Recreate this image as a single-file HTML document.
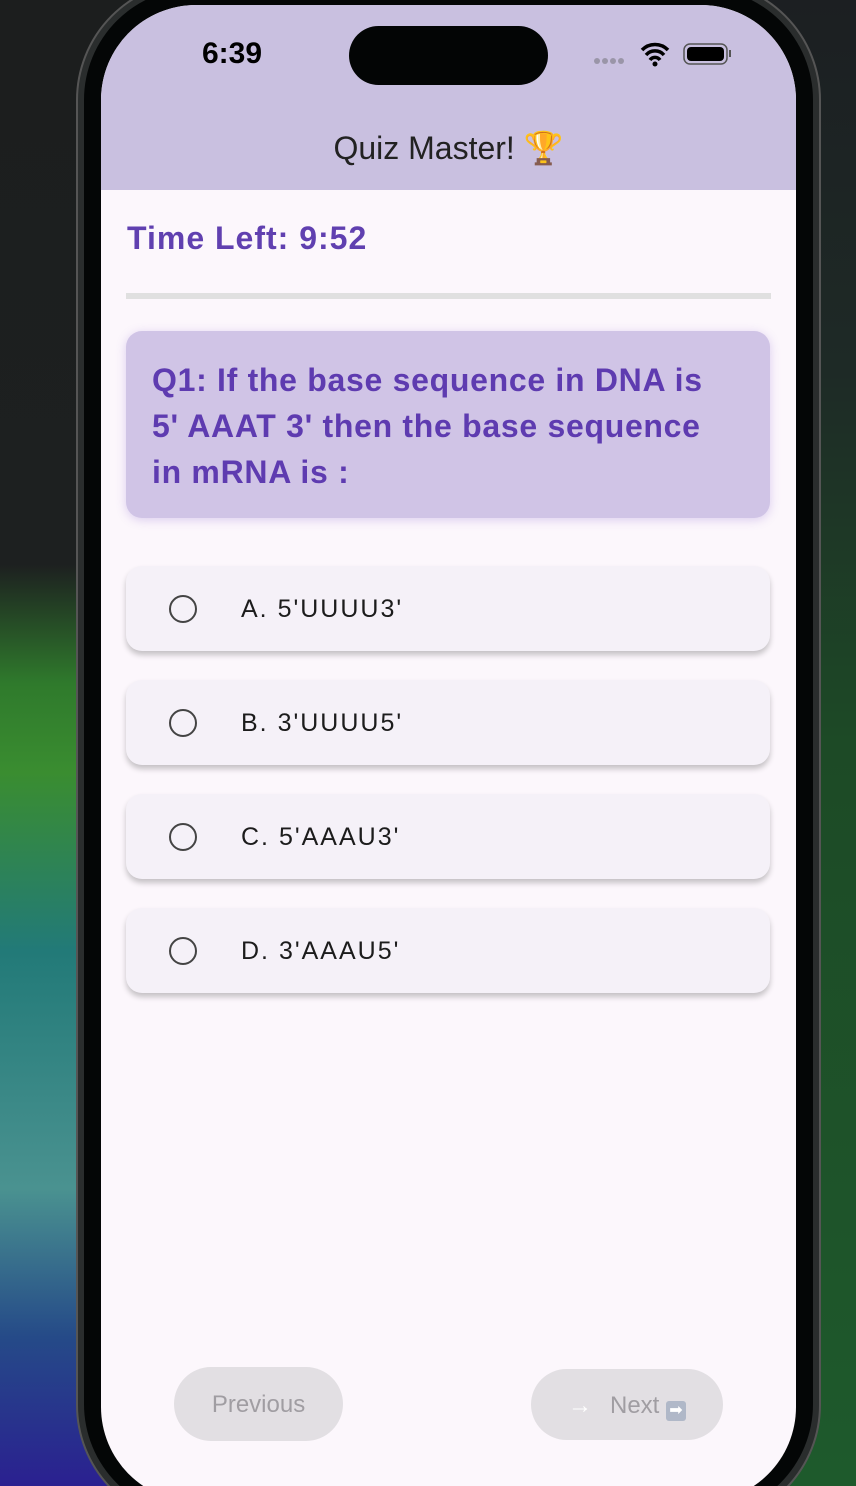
<!DOCTYPE html>
<html style="overflow:hidden;width:856px;height:1486px"><head><style>
*{margin:0;padding:0;box-sizing:border-box}
body{width:856px;height:1486px;overflow:hidden;position:relative;font-family:"Liberation Sans",sans-serif}
.wrap{position:absolute;left:0;top:0;width:856px;height:1486px;overflow:hidden}
.bgl{position:absolute;left:0;top:0;width:430px;height:1486px;background:linear-gradient(180deg,#1c1e1e 0%,#1d2020 38%,#2f7a2c 46%,#3a8d30 52%,#227a78 64%,#4a9290 80%,#254a88 90%,#2a2090 100%)}
.bgr{position:absolute;left:430px;top:0;width:426px;height:1486px;background:linear-gradient(180deg,#1c1f22 0%,#1e2a26 25%,#1d4a26 50%,#1e5a2c 100%)}
.frame{position:absolute;left:76px;top:-20px;width:745px;height:1545px;border-radius:120px;background:#2a2d2d;border:2px solid #555}
.bez{position:absolute;left:84px;top:-12px;width:729px;height:1528px;border-radius:112px;background:#040606}
.screen{position:absolute;left:101px;top:5px;width:695px;height:1497px;border-radius:95px;overflow:hidden;background:#fcf7fc}
.hdr{position:absolute;left:0;top:0;width:695px;height:185px;background:#c9c0e0}
.time{position:absolute;left:101px;top:32px;font-size:30px;font-weight:bold;color:#000}
.island{position:absolute;left:248px;top:21px;width:199px;height:59px;border-radius:30px;background:#030505}
.title{position:absolute;left:0;width:695px;top:124px;text-align:center;font-size:32px;color:#222}
.tl{position:absolute;left:26px;top:215px;font-size:32px;font-weight:bold;color:#6040b0;letter-spacing:1px}
.bar{position:absolute;left:25px;top:288px;width:645px;height:6px;background:#e0e0e0}
.q{position:absolute;left:25px;top:326px;width:644px;height:187px;border-radius:16px;background:#d0c4e6;box-shadow:0 2px 10px rgba(120,80,200,.25);padding:26px 26px;font-size:32px;font-weight:bold;color:#5e3bb0;line-height:46px;letter-spacing:0.7px;white-space:nowrap}
.opt{position:absolute;left:25px;width:644px;height:85px;border-radius:16px;background:#f5f1f8;box-shadow:0 4px 6px rgba(0,0,0,.22)}
.opt .c{position:absolute;left:43px;top:29px;width:28px;height:28px;border-radius:50%;border:2.5px solid #444}
.opt span{position:absolute;left:115px;top:29px;font-size:25px;color:#1c1c1c;letter-spacing:2px}
.btn{position:absolute;background:#e2dfe3;border-radius:37px;color:#a09da2;font-size:24px;text-align:center}
</style></head><body><div class="wrap">
<div class="bgl"></div><div class="bgr"></div>
<div class="frame"></div><div class="bez"></div>
<div class="screen">
<div class="hdr"></div>
<div class="time">6:39</div>
<div class="island"></div>
<svg style="position:absolute;left:492px;top:34px" width="140" height="30">
<circle cx="4" cy="22" r="3" fill="#9a95a8"/><circle cx="12" cy="22" r="3" fill="#9a95a8"/><circle cx="20" cy="22" r="3" fill="#9a95a8"/><circle cx="28" cy="22" r="3" fill="#9a95a8"/>
<path d="M49 11 a18 18 0 0 1 26 0 M53 16 a12 12 0 0 1 18 0 M57 21 a6 6 0 0 1 10 0" stroke="#000" stroke-width="3.5" fill="none"/>
<circle cx="62" cy="25" r="2.5" fill="#000"/>
<rect x="91" y="5" width="43" height="20" rx="6" fill="none" stroke="#555" stroke-width="1.5"/>
<rect x="94" y="8" width="37" height="14" rx="4" fill="#000"/>
<rect x="136" y="11" width="2" height="7" fill="#555"/>
</svg>
<div class="title">Quiz Master! 🏆</div>
<div class="tl">Time Left: 9:52</div>
<div class="bar"></div>
<div class="q">Q1: If the base sequence in DNA is<br>5' AAAT 3' then the base sequence<br>in mRNA is :</div>
<div class="opt" style="top:561px"><div class="c"></div><span>A. 5'UUUU3'</span></div>
<div class="opt" style="top:675px"><div class="c"></div><span>B. 3'UUUU5'</span></div>
<div class="opt" style="top:789px"><div class="c"></div><span>C. 5'AAAU3'</span></div>
<div class="opt" style="top:903px"><div class="c"></div><span>D. 3'AAAU5'</span></div>
<div class="btn" style="left:73px;top:1362px;width:169px;height:74px;line-height:76px">Previous</div>
<div class="btn" style="left:430px;top:1364px;width:192px;height:71px;line-height:73px"><span style="color:#fff;margin-right:18px">→</span>Next <span style="display:inline-block;width:20px;height:20px;background:#b0b8c8;border-radius:3px;color:#fff;font-size:16px;line-height:20px;vertical-align:-2px">➡</span></div>
</div>
</div></body></html>
